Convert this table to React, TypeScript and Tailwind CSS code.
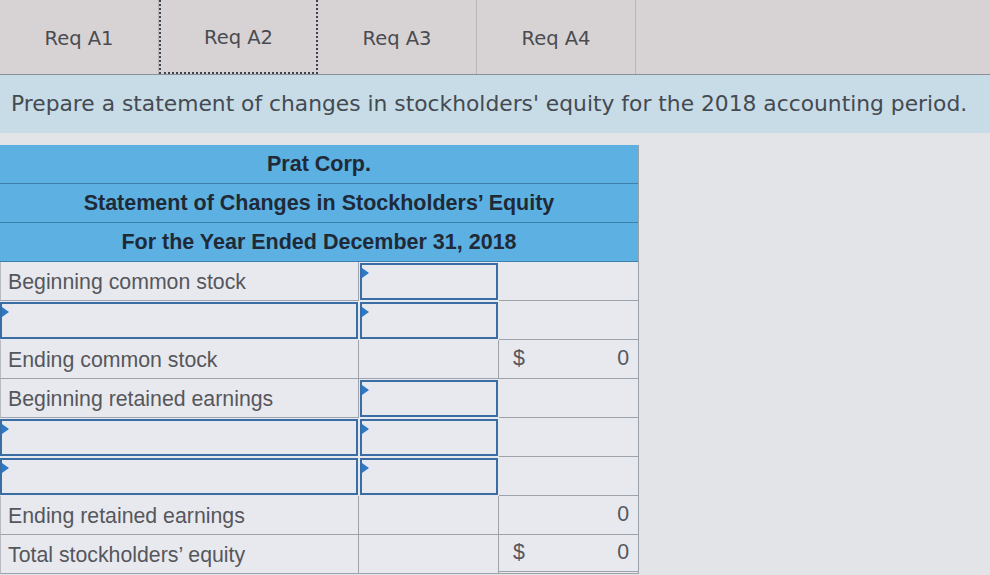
const tabs = ['Req A1', 'Req A2', 'Req A3', 'Req A4']

type Row = {
  label?: string
  labelInput?: boolean
  amtInput?: boolean
  dollar?: boolean
  total?: string
  doubleLine?: boolean
}

const rows: Row[] = [
  { label: 'Beginning common stock', amtInput: true },
  { labelInput: true, amtInput: true },
  { label: 'Ending common stock', dollar: true, total: '0' },
  { label: 'Beginning retained earnings', amtInput: true },
  { labelInput: true, amtInput: true },
  { labelInput: true, amtInput: true },
  { label: 'Ending retained earnings', total: '0' },
  { label: 'Total stockholders\u2019 equity', dollar: true, total: '0', doubleLine: true },
]

function Marker() {
  return (
    <span className="absolute left-0 top-[3px] w-0 h-0 border-y-[5px] border-y-transparent border-l-[7px] border-l-[#2f78c4]" />
  )
}

export default function App() {
  return (
    <div className="w-[990px] h-[575px] overflow-hidden bg-[#e3e4e8] text-[#4a4b50]">
      {/* Tabs */}
      <div className="flex h-[75px] bg-[#d7d3d5] border-b border-[#8e8e96] font-['DejaVu_Sans',sans-serif] text-[19.5px]">
        {tabs.map((t, i) => (
          <div
            key={t}
            className={`w-[159px] flex items-center justify-center pt-[4px] ${
              i === 1
                ? 'border-x-2 border-b-2 border-dotted border-[#3c4250]'
                : 'border-r border-[#b9b6ba]'
            }`}
          >
            {t}
          </div>
        ))}
      </div>

      {/* Instruction */}
      <div className="h-[58px] bg-[#c7dce7] flex items-center pl-[11px] pt-[1px] font-['DejaVu_Sans',sans-serif] text-[21.8px] text-[#454a52]">
        Prepare a statement of changes in stockholders' equity for the 2018 accounting period.
      </div>

      {/* Statement table */}
      <div className="pt-[12px] font-['Liberation_Sans',Arial,sans-serif]">
        <div className="w-[639px] border-r border-[#9aa0aa]">
          {['Prat Corp.', 'Statement of Changes in Stockholders\u2019 Equity', 'For the Year Ended December 31, 2018'].map((h) => (
            <div
              key={h}
              className="h-[39px] bg-[#5cb0e2] border-b border-[#3f7fae] flex items-center justify-center text-[21.5px] font-bold text-[#1f2a36]"
            >
              {h}
            </div>
          ))}
          {rows.map((r, i) => (
            <div key={i} className="grid grid-cols-[359px_140px_140px] h-[39px] bg-[#e8e9ee] text-[21.3px] text-[#55575c]">
              <div
                className={`relative flex items-center pl-[7px] pt-[3px] ${
                  r.labelInput
                    ? 'border-2 border-[#3a6da3] m-[1px] ml-0'
                    : 'border-b border-r border-[#9ea2aa] border-l border-l-[#b8bbc2]'
                }`}
              >
                {r.labelInput && <Marker />}
                {r.label}
              </div>
              <div
                className={`relative ${
                  r.amtInput ? 'border-2 border-[#3a6da3] m-[1px]' : 'border-b border-r border-[#9ea2aa]'
                }`}
              >
                {r.amtInput && <Marker />}
              </div>
              <div className={`flex items-center justify-between pl-[14px] pr-[10px] border-b border-[#9ea2aa] ${r.doubleLine ? 'border-b-[3px] border-double border-[#6b6e76]' : ''}`}>
                <span>{r.dollar ? '$' : ''}</span>
                <span>{r.total ?? ''}</span>
              </div>
            </div>
          ))}
        </div>
      </div>
    </div>
  )
}
